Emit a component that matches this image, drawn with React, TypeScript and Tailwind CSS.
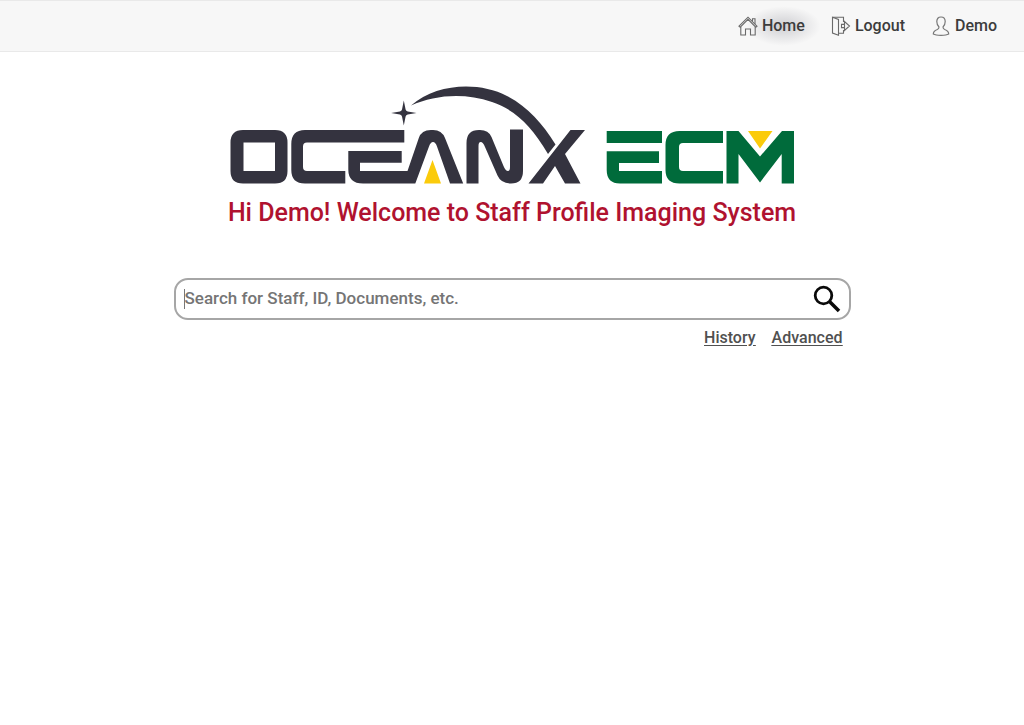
import React from "react";

function HomeIcon() {
  return (
    <svg viewBox="0 0 20 20" className="h-5 w-5" fill="none" stroke="#6a6a6a" strokeWidth="1.100" aria-hidden="true">
      <path d="M1 10.200 10 1.200l9 9-1.200 1L10 3.400 2.200 11.200z" />
      <path d="M2.800 11v8h4.700v-6h5v6h4.700v-8M14.500 5.300V2.700H17V8" />
    </svg>
  );
}

function LogoutIcon() {
  return (
    <svg viewBox="0 0 20 20" className="h-5 w-5" fill="none" stroke="#6a6a6a" strokeWidth="1.100" aria-hidden="true">
      <path d="M1.500 1.200 7.500 3.400v15.800l-6-2.200z" />
      <path d="M1.500 1.200H12.500V6M7.500 17.200h5V14" />
      <path d="M10.500 8.400h3V5.500l5 4.500-5 4.500v-2.900h-3zM13.500 8.400v3.200" />
    </svg>
  );
}

function UserIcon() {
  return (
    <svg viewBox="0 0 18 20" className="h-5 w-5" fill="none" stroke="#777" strokeWidth="1.200" aria-hidden="true">
      <path d="M9 1C6.200 1 4.800 3 4.800 5.600c0 2.200.8 4.200 2.200 5.400 0 1.500-.5 2-1.700 2.500-2.500.9-4 1.700-4 4.500C3 19 6 19.300 9 19.300s6-.3 7.700-1.300c0-2.800-1.500-3.600-4-4.500-1.200-.5-1.700-1-1.700-2.500 1.400-1.200 2.200-3.200 2.200-5.400C13.200 3 11.800 1 9 1z" />
    </svg>
  );
}

function SearchIcon() {
  return (
    <svg viewBox="0 0 28 28" className="h-7 w-7" fill="none" stroke="#0a0a0a" aria-hidden="true">
      <circle cx="10.500" cy="10.500" r="8.300" strokeWidth="2.800" />
      <path d="m16.500 16.500 9.500 9.500" strokeWidth="3.600" />
    </svg>
  );
}

function Logo() {
  return (
    <svg viewBox="230 85 567 99" className="block w-full" role="img" aria-label="OceanX ECM">
      <g fill="#34333f">
        <path fillRule="evenodd" d="M244 130h32q12.500 0 12.500 12.500v28.500q0 12.500-12.500 12.500h-32q-12.500 0-12.500-12.500v-28.500q0-12.500 12.500-12.500zM244.500 142.500V171H276v-28.500z" />
        <path d="M405.300 130v12.500H308q-4 0-4 4V167q0 4 4 4h38.300v12.500H306q-13.700 0-13.700-13.500v-26q0-14 13.700-14z" />
        <path d="M349.300 151h53.400v11.700H361V171h47.500L419.800 138q2.700-8 12-8h2.400q8.500 0 11.800 8l18.200 45.500H451L438 146.500q-1.500-4.500-4-4.500t-4 4.500L416.300 183.500H364q-14.700 0-14.700-14z" />
        <path d="M467.500 183.500V143q0-13 12.500-13h1q8.500 0 11.500 7l12 29q2 5 4.500 5 2 0 2-4V129.500h13V171q0 12.500-12 12.500-10 0-13.500-8L486 147q-2-5-4.300-5-2.200 0-2.200 4v37.500z" />
        <path d="M571.500 130H586l-20 24 15.500 29.500H566L556 166l-12 17.500h-14.500z" />
        <path d="M412 105.500C438 83 480 81.500 508 96c21 11 35 27 48.500 48.500L549 154C532 125 516 110 493 102 465 92.500 436 95 412 105.500z" />
        <path d="M404.800 100.500 406.600 109.500Q407 111.200 408.700 111.500L417.500 113 408.700 114.500Q407 114.800 406.600 116.500L404.800 125.500 403 116.500Q402.600 114.800 400.900 114.500L392.100 113 400.900 111.500Q402.600 111.200 403 109.500z" />
      </g>
      <path fill="#fbcb0b" d="m433.500 160 8.500 23.500h-17zM749 131h24.500L761 148.500z" />
      <g fill="#006b3b">
        <path d="M607.700 131H663v12h-55.300zM607.700 151.200H660V163h-40v8h43v12.500h-42q-13.300 0-13.300-13.500z" />
        <path d="M724 131v12h-40q-4 0-4 4v20q0 4 4 4h40v12.500h-43.500q-14 0-14-13.500v-25q0-14 14-14z" />
        <path d="M727.500 131h12L761 156.500 783 131h12v52.500h-12.300V154L761 182.500 739.500 154v29.500h-12z" />
      </g>
    </svg>
  );
}

export default function App() {
  return (
    <div className="min-h-screen bg-white font-['Roboto',sans-serif] font-medium text-[#3c3c3c]">
      <header className="border-y border-[#e9e9e9] bg-[#f7f7f7]">
        <nav aria-label="Main" className="flex h-[50px] items-center justify-end gap-[26px] pr-[27px] text-base">
          <a href="#home" aria-current="page" className="flex items-center gap-1">
            <HomeIcon />
            <span className="bg-radial from-[#70707c]/30 to-transparent to-70% -mx-4 px-4 py-2">Home</span>
          </a>
          <a href="#logout" className="flex items-center gap-1">
            <LogoutIcon />
            Logout
          </a>
          <a href="#demo" className="flex items-center gap-1">
            <UserIcon />
            Demo
          </a>
        </nav>
      </header>

      <main className="mx-auto flex max-w-[677px] flex-col items-center pt-[33px]">
        <div className="w-full max-w-[567px]">
          <Logo />
        </div>
        <h1 className="mt-[13px] text-center text-[25px] leading-8 text-[#b0122f]">
          Hi Demo! Welcome to Staff Profile Imaging System
        </h1>

        <form role="search" className="mt-[49px] w-full" onSubmit={(e) => e.preventDefault()}>
          <div className="flex h-[42px] items-center rounded-[14px] border-2 border-[#a6a6a6] bg-white px-2">
            <span aria-hidden="true" className="h-5 w-px bg-[#777]" />
            <input
              type="text"
              aria-label="Search"
              placeholder="Search for Staff, ID, Documents, etc."
              className="min-w-0 flex-1 bg-transparent text-[17px] outline-none placeholder:text-[#757575]"
            />
            <button type="submit" aria-label="Search">
              <SearchIcon />
            </button>
          </div>
          <div className="mt-[6px] flex justify-end gap-4 pr-2 text-base text-[#505050] underline underline-offset-2">
            <a href="#history">History</a>
            <a href="#advanced">Advanced</a>
          </div>
        </form>
      </main>
    </div>
  );
}
